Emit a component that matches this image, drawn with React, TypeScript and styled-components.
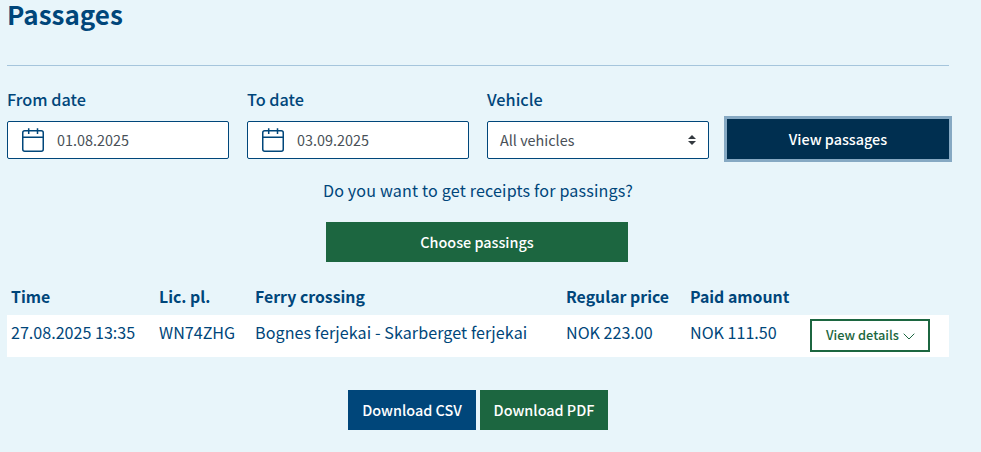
import React from "react";
import styled, { createGlobalStyle } from "styled-components";

const navy = "#00467a";
const green = "#1c6640";

const GlobalStyle = createGlobalStyle`
  * { box-sizing: border-box; }
  body {
    margin: 0;
    background: #e8f5fa;
    color: ${navy};
    font-family: "Noto Sans CJK JP", "Noto Sans", sans-serif;
    font-size: 16.1px;
  }
  button, input, select { font-family: inherit; }
`;

const Page = styled.main`
  width: 942px;
  height: 452px;
  margin-left: 7px;
  display: flex;
  flex-direction: column;
`;

const Title = styled.h1`
  margin: 0;
  height: 66px;
  border-bottom: 1px solid #a5c5dc;
  font-size: 26px;
  font-weight: 700;
  line-height: 28px;
`;

const Filters = styled.form`
  display: grid;
  grid-template-columns: 222px 222px 222px 222px;
  column-gap: 18px;
  align-items: end;
  margin-top: 22px;
  height: 71px;
`;

const Field = styled.label`
  display: flex;
  flex-direction: column;
  font-weight: 500;
  font-size: 16.25px;
  line-height: 22px;
  gap: 11px;
`;

const Control = styled.span<{ $select?: boolean }>`
  display: flex;
  align-items: center;
  justify-content: ${(p) => (p.$select ? "space-between" : "flex-start")};
  gap: 12px;
  height: 38px;
  padding: 0 12px 0 ${(p) => (p.$select ? 12 : 13)}px;
  border: 1px solid ${navy};
  border-radius: 2px;
  background: #fff;
  color: #495057;
  font-size: 14.4px;
  font-weight: 400;
`;

const Button = styled.button<{ $width: number; $bg: string }>`
  width: ${(p) => p.$width}px;
  height: 40px;
  padding: 0;
  border: 0;
  background: ${(p) => p.$bg};
  color: #fff;
  font-size: 14.4px;
  font-weight: 500;
  line-height: 40px;
  white-space: nowrap;
`;

const SubmitButton = styled(Button)`
  box-shadow: 0 0 0 3px #86a9c3;
`;

const Receipts = styled.section`
  display: flex;
  flex-direction: column;
  align-items: center;
  width: 940px;
  margin-top: 20px;
  gap: 21px;
  line-height: 22px;
`;

const Question = styled.span`
  padding-left: 2px;
  letter-spacing: 0.17px;
`;

const Table = styled.div`
  margin-top: 17px;
`;

const Row = styled.div<{ $head?: boolean }>`
  display: grid;
  grid-template-columns: 148px 96px 311px 124px 120px 120px;
  height: ${(p) => (p.$head ? 36 : 42)}px;
  padding: 7px 0 0 4px;
  background: ${(p) => (p.$head ? "transparent" : "#fff")};
  font-size: ${(p) => (p.$head ? 15.85 : 16.1)}px;
  font-weight: ${(p) => (p.$head ? 700 : 400)};
  line-height: 21px;
  white-space: nowrap;
`;

const Crossing = styled.span`
  letter-spacing: 0.08px;
`;

const DetailsButton = styled.button`
  display: flex;
  align-items: center;
  justify-content: center;
  gap: 4px;
  width: 120px;
  height: 33px;
  margin-top: -3px;
  padding: 0 0 1px 1px;
  border: 2px solid ${green};
  background: #fff;
  color: ${green};
  font-size: 12.8px;
  font-weight: 500;
  line-height: 20px;

  svg {
    margin-top: 3px;
  }
`;

const Downloads = styled.div`
  display: flex;
  justify-content: center;
  width: 942px;
  gap: 4px;
  margin-top: 33px;
`;

const CalendarIcon = () => (
  <svg width="24" height="26" viewBox="0 0 24 26" fill="none" stroke={navy} strokeWidth="1.5">
    <rect x="1.75" y="3.75" width="20.5" height="20.5" rx="2" />
    <path d="M2 10.25H22M7.7 1.25V7M16.5 1.25V7" />
  </svg>
);

const SortIcon = () => (
  <svg width="8" height="10" viewBox="0 0 8 10" fill="#343a40">
    <path d="M4 0L8 4H0ZM0 6H8L4 10Z" />
  </svg>
);

const ChevronIcon = () => (
  <svg width="12" height="7" viewBox="0 0 12 7" fill="none" stroke={green}>
    <path d="M.7.7L6 6L11.3.7" />
  </svg>
);

export default function App() {
  return (
    <>
      <GlobalStyle />
      <Page>
        <Title>Passages</Title>
        <Filters>
          <Field>
            From date
            <Control><CalendarIcon />01.08.2025</Control>
          </Field>
          <Field>
            To date
            <Control><CalendarIcon />03.09.2025</Control>
          </Field>
          <Field>
            Vehicle
            <Control $select>All vehicles<SortIcon /></Control>
          </Field>
          <SubmitButton type="button" $width={222} $bg="#002f50">View passages</SubmitButton>
        </Filters>
        <Receipts>
          <Question>Do you want to get receipts for passings?</Question>
          <Button type="button" $width={302} $bg={green}>Choose passings</Button>
        </Receipts>
        <Table>
          <Row $head>
            <span>Time</span>
            <span>Lic. pl.</span>
            <span>Ferry crossing</span>
            <span>Regular price</span>
            <span>Paid amount</span>
          </Row>
          <Row>
            <span>27.08.2025 13:35</span>
            <span>WN74ZHG</span>
            <Crossing>Bognes ferjekai - Skarberget ferjekai</Crossing>
            <span>NOK 223.00</span>
            <span>NOK 111.50</span>
            <DetailsButton type="button">View details<ChevronIcon /></DetailsButton>
          </Row>
        </Table>
        <Downloads>
          <Button type="button" $width={128} $bg={navy}>Download CSV</Button>
          <Button type="button" $width={128} $bg={green}>Download PDF</Button>
        </Downloads>
      </Page>
    </>
  );
}
